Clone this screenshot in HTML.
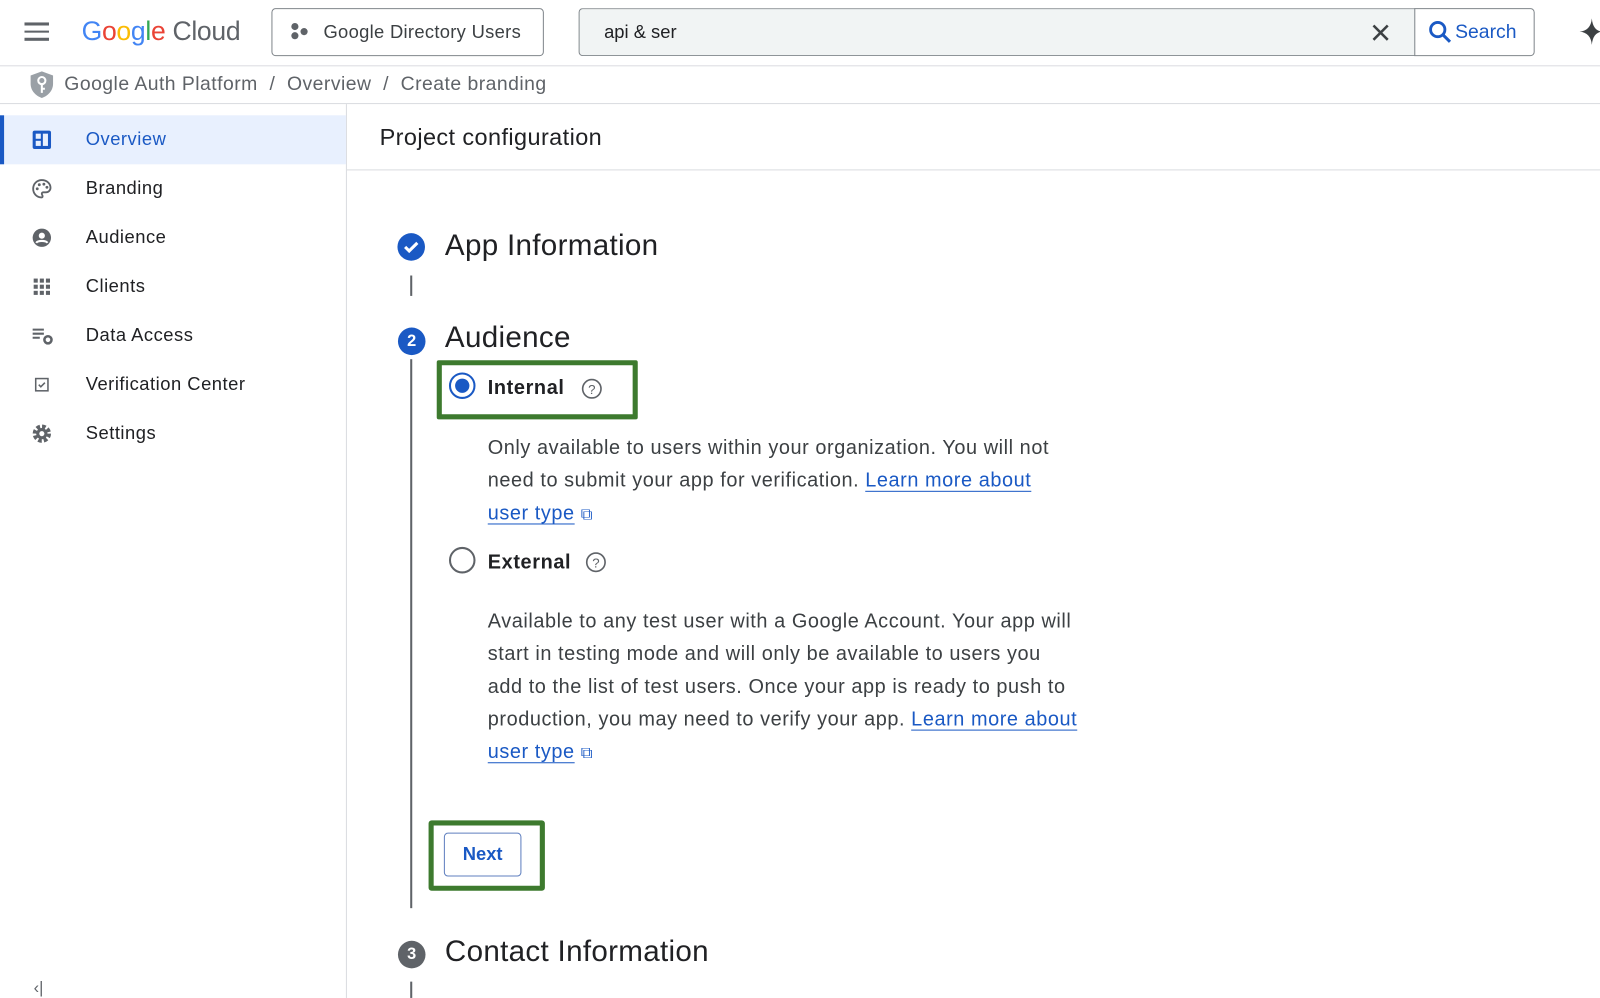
<!DOCTYPE html>
<html><head><meta charset="utf-8"><style>
html,body{margin:0;padding:0;background:#fff;overflow:hidden;width:1600px;height:998px}
#w{position:absolute;left:0;top:0;width:1568px;height:978px;transform:scale(1.0204);transform-origin:0 0;font-family:"Liberation Sans",Arial,sans-serif;color:#202124}
.a{position:absolute;white-space:nowrap}
.nav{position:absolute;left:0;width:339px;height:48px}
.nav .t{position:absolute;left:84px;top:13px;font-size:18px;color:#202124;letter-spacing:0.5px}
.nav svg{position:absolute;left:31px;top:14px}
.p{font-size:19.5px;line-height:32px;color:#3c4043;letter-spacing:0.55px}
.lk{color:#1a59c4;text-decoration:underline;text-underline-offset:4px}
.h{font-size:29px;letter-spacing:0.3px}
</style></head><body><div id="w">
<!-- header -->
<div class="a" style="left:24px;top:22px;width:24px;height:18px">
<div style="height:2.5px;background:#5f6368;margin-bottom:5px"></div><div style="height:2.5px;background:#5f6368;margin-bottom:5px"></div><div style="height:2.5px;background:#5f6368"></div></div>
<div class="a" style="left:80px;top:15px;font-size:26px;letter-spacing:-0.3px"><span style="color:#4285f4">G</span><span style="color:#ea4335">o</span><span style="color:#fbbc04">o</span><span style="color:#4285f4">g</span><span style="color:#34a853">l</span><span style="color:#ea4335">e</span><span style="color:#5f6368"> Cloud</span></div>
<div class="a" style="left:266px;top:8px;width:265px;height:45px;border:1px solid #80868b;border-radius:4px"></div>
<svg class="a" style="left:284px;top:22px" width="20" height="18"><circle cx="5" cy="4" r="3.5" fill="#5f6368"/><circle cx="5" cy="13" r="3.5" fill="#5f6368"/><circle cx="14" cy="9" r="3.5" fill="#5f6368"/></svg>
<div class="a" style="left:317px;top:21px;font-size:18px;color:#3c4043;letter-spacing:0.3px">Google Directory Users</div>
<div class="a" style="left:567px;top:8px;width:819px;height:45px;border:1px solid #80868b;border-right:none;border-radius:4px 0 0 4px;background:#f1f4f4"></div>
<div class="a" style="left:1386px;top:8px;width:116px;height:45px;border:1px solid #80868b;border-radius:0 4px 4px 0;background:#fff"></div>
<div class="a" style="left:592px;top:21px;font-size:18px;color:#202124">api &amp; ser</div>
<svg class="a" style="left:1343px;top:22px" width="20" height="20"><path d="M3 3L17 17M17 3L3 17" stroke="#3c4043" stroke-width="2.5"/></svg>
<svg class="a" style="left:1399px;top:19px" width="26" height="26"><circle cx="10" cy="10" r="7" stroke="#1a59c4" stroke-width="2.8" fill="none"/><path d="M15 15L22 22" stroke="#1a59c4" stroke-width="3"/></svg>
<div class="a" style="left:1426px;top:21px;font-size:19px;color:#1a59c4">Search</div>
<svg class="a" style="left:1546px;top:16px" width="24" height="30"><path d="M14 2Q15 14 24 15Q15 16 14 28Q13 16 2 15Q13 14 14 2Z" fill="#3c4043"/></svg>
<div class="a" style="left:0;top:64px;width:1568px;height:1px;background:#dadce0"></div>
<!-- breadcrumb -->
<svg class="a" style="left:29px;top:69px" width="24" height="28"><path d="M12 1L23 5V13C23 20 18 25 12 27C6 25 1 20 1 13V5Z" fill="#9aa0a6"/><circle cx="12" cy="10" r="3.5" fill="none" stroke="#fff" stroke-width="2"/><path d="M12 13V22M12 18H15" stroke="#fff" stroke-width="2"/></svg>
<div class="a" style="left:63px;top:72px;font-size:19px;color:#5f6368;letter-spacing:0.45px">Google Auth Platform &nbsp;/&nbsp; Overview &nbsp;/&nbsp; Create branding</div>
<div class="a" style="left:0;top:101px;width:1568px;height:1px;background:#dadce0"></div>
<!-- sidebar -->
<div class="a" style="left:339px;top:102px;width:1px;height:876px;background:#dadce0"></div>
<div class="nav" style="top:113px;background:#e8f0fe"><div style="position:absolute;left:0;top:0;width:4px;height:48px;background:#1a59c4"></div>
<svg width="20" height="20"><rect x="1" y="1" width="18" height="18" rx="2" fill="#1a59c4"/><rect x="4" y="4" width="5" height="5" fill="#e8f0fe"/><rect x="11" y="4" width="5" height="12" fill="#e8f0fe"/><rect x="4" y="11" width="5" height="5" fill="#e8f0fe"/></svg><span class="t" style="color:#1a59c4">Overview</span></div>
<div class="nav" style="top:161px"><svg width="20" height="20"><path d="M10 1.5C5 1.5 1.5 5.3 1.5 10S5 18.5 9.5 18.5C11 18.5 11 17 10.3 16C9.5 15 10 13.5 11.5 13.5H14C16.5 13.5 18.5 11.5 18.5 9C18.5 4.8 14.7 1.5 10 1.5Z" fill="none" stroke="#5f6368" stroke-width="1.8"/><circle cx="5.5" cy="10" r="1.4" fill="#5f6368"/><circle cx="7.5" cy="6" r="1.4" fill="#5f6368"/><circle cx="12" cy="5.5" r="1.4" fill="#5f6368"/><circle cx="15" cy="8.5" r="1.4" fill="#5f6368"/></svg><span class="t">Branding</span></div>
<div class="nav" style="top:209px"><svg width="20" height="20"><circle cx="10" cy="10" r="9" fill="#5f6368"/><circle cx="10" cy="8" r="3" fill="#fff"/><path d="M4.5 15C6 12.5 14 12.5 15.5 15" stroke="#fff" stroke-width="2" fill="none"/></svg><span class="t">Audience</span></div>
<div class="nav" style="top:257px"><svg width="20" height="20"><g fill="#5f6368"><rect x="2" y="2" width="4" height="4"/><rect x="8" y="2" width="4" height="4"/><rect x="14" y="2" width="4" height="4"/><rect x="2" y="8" width="4" height="4"/><rect x="8" y="8" width="4" height="4"/><rect x="14" y="8" width="4" height="4"/><rect x="2" y="14" width="4" height="4"/><rect x="8" y="14" width="4" height="4"/><rect x="14" y="14" width="4" height="4"/></g></svg><span class="t">Clients</span></div>
<div class="nav" style="top:305px"><svg width="22" height="20"><path d="M1 4H12M1 8H12M1 12H8" stroke="#5f6368" stroke-width="2"/><circle cx="16" cy="14" r="3.5" fill="none" stroke="#5f6368" stroke-width="2.5"/></svg><span class="t">Data Access</span></div>
<div class="nav" style="top:353px"><svg width="20" height="20"><rect x="4" y="4" width="12" height="12" fill="none" stroke="#5f6368" stroke-width="1.5"/><path d="M7 10L9 12L13 8" stroke="#5f6368" stroke-width="1.5" fill="none"/></svg><span class="t">Verification Center</span></div>
<div class="nav" style="top:401px"><svg width="20" height="20"><circle cx="10" cy="10" r="7" fill="none" stroke="#5f6368" stroke-width="4" stroke-dasharray="3.5 2"/><circle cx="10" cy="10" r="5.5" fill="#5f6368"/><circle cx="10" cy="10" r="2.5" fill="#fff"/></svg><span class="t">Settings</span></div>
<div class="a" style="left:33px;top:960px;font-size:16px;color:#5f6368">‹|</div>
<!-- main -->
<div class="a" style="left:372px;top:121px;font-size:23px;color:#202124;letter-spacing:0.4px">Project configuration</div>
<div class="a" style="left:340px;top:166px;width:1228px;height:1px;background:#dadce0"></div>
<svg class="a" style="left:389px;top:228px" width="28" height="28"><circle cx="14" cy="14" r="13.5" fill="#1a59c4"/><path d="M8 14L12 18L20 10" stroke="#fff" stroke-width="3" fill="none"/></svg>
<div class="a h" style="left:436px;top:225px">App Information</div>
<div class="a" style="left:402px;top:270px;width:1.5px;height:20px;background:#5f6368"></div>
<div class="a" style="left:390px;top:321px;width:27px;height:27px;border-radius:50%;background:#1a59c4;color:#fff;font-size:16px;font-weight:bold;text-align:center;line-height:27px">2</div>
<div class="a h" style="left:436px;top:315px">Audience</div>
<div class="a" style="left:402px;top:352px;width:1.5px;height:538px;background:#5f6368"></div>
<div class="a" style="left:428px;top:353px;width:187px;height:48px;border:5px solid #3d7a2e;border-radius:2px"></div>
<div class="a" style="left:440px;top:365px;width:26px;height:26px;border:2px solid #1a59c4;border-radius:50%;box-sizing:border-box"></div>
<div class="a" style="left:446px;top:371px;width:14px;height:14px;border-radius:50%;background:#1a59c4"></div>
<div class="a" style="left:478px;top:369px;font-size:19.5px;font-weight:bold;color:#202124;letter-spacing:0.6px">Internal</div>
<svg class="a" style="left:569px;top:370px" width="22" height="22"><circle cx="11" cy="11" r="9" fill="none" stroke="#5f6368" stroke-width="1.6"/><text x="11" y="16" font-size="13" text-anchor="middle" fill="#5f6368" font-family="Liberation Sans">?</text></svg>
<div class="a p" style="left:478px;top:423px">Only available to users within your organization. You will not<br>need to submit your app for verification. <span class="lk">Learn more about</span><br><span class="lk">user type</span> <span style="color:#1a59c4;font-size:16px">⧉</span></div>
<div class="a" style="left:440px;top:536px;width:26px;height:26px;border:2px solid #5f6368;border-radius:50%;box-sizing:border-box"></div>
<div class="a" style="left:478px;top:540px;font-size:19.5px;font-weight:bold;color:#202124;letter-spacing:0.6px">External</div>
<svg class="a" style="left:573px;top:540px" width="22" height="22"><circle cx="11" cy="11" r="9" fill="none" stroke="#5f6368" stroke-width="1.6"/><text x="11" y="16" font-size="13" text-anchor="middle" fill="#5f6368" font-family="Liberation Sans">?</text></svg>
<div class="a p" style="left:478px;top:593px">Available to any test user with a Google Account. Your app will<br>start in testing mode and will only be available to users you<br>add to the list of test users. Once your app is ready to push to<br>production, you may need to verify your app. <span class="lk">Learn more about</span><br><span class="lk">user type</span> <span style="color:#1a59c4;font-size:16px">⧉</span></div>
<div class="a" style="left:420px;top:804px;width:104px;height:59px;border:5px solid #3d7a2e;border-radius:3px"></div>
<div class="a" style="left:435px;top:816px;width:74px;height:41px;border:1px solid #5f7fbf;border-radius:4px;color:#1a59c4;font-size:18px;font-weight:bold;text-align:center;line-height:41px">Next</div>
<div class="a" style="left:390px;top:922px;width:27px;height:27px;border-radius:50%;background:#5f6368;color:#fff;font-size:16px;font-weight:bold;text-align:center;line-height:27px">3</div>
<div class="a h" style="left:436px;top:917px">Contact Information</div>
<div class="a" style="left:402px;top:962px;width:1.5px;height:16px;background:#5f6368"></div>
</div></body></html>
